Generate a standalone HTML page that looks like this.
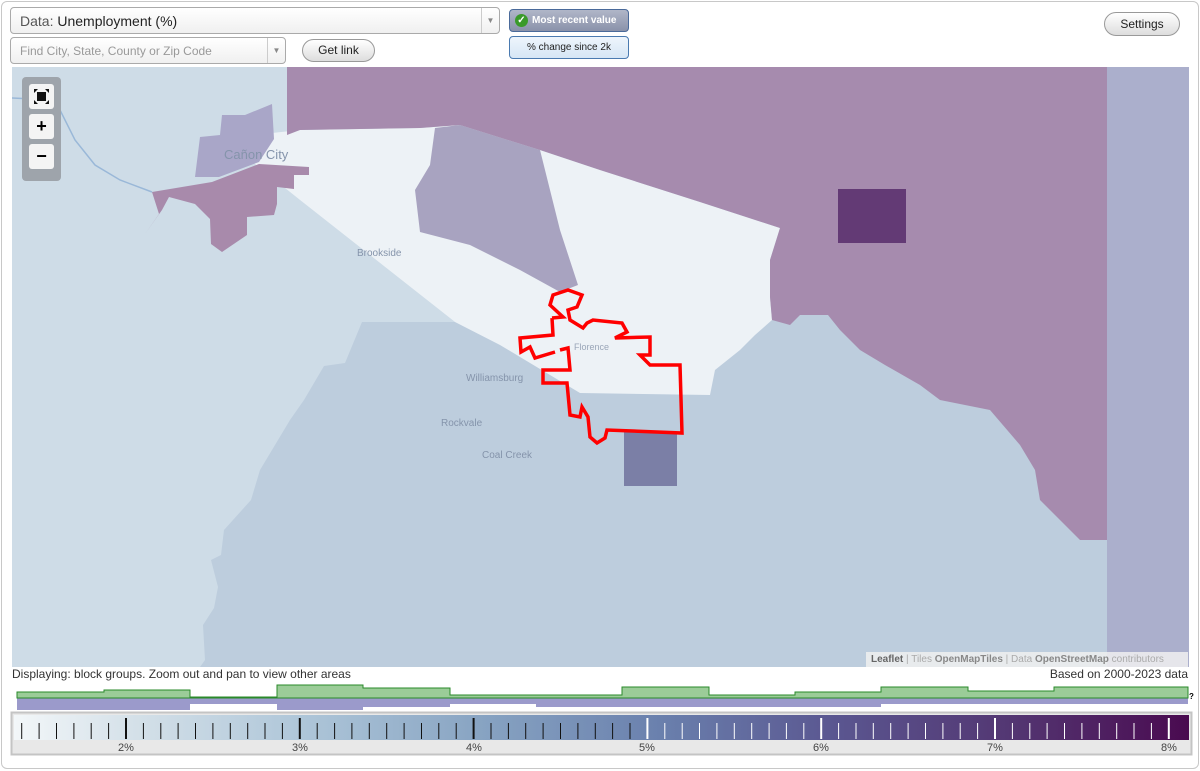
<!DOCTYPE html>
<html><head><meta charset="utf-8"><style>
*{margin:0;padding:0;box-sizing:border-box}
body{width:1200px;height:771px;background:#fff;font-family:"Liberation Sans",Arial,sans-serif;position:relative;overflow:hidden}
.frame{position:absolute;left:1px;top:1px;width:1198px;height:768px;border:1px solid #c8c8c8;border-radius:6px}
.sel{position:absolute;border:1px solid #aaa;border-radius:4px;background:linear-gradient(#fff,#f0f0f0);}
.arrow{position:absolute;right:0;top:0;bottom:0;width:18px;border-left:1px solid #ccc;color:#888;font-size:8px;text-align:center}
.btn{position:absolute;border:1px solid #999;border-radius:12px;background:linear-gradient(#fff,#ddd);font-size:12px;text-align:center;color:#222}
.t{position:absolute;color:#8594ab;font-family:"Liberation Sans",sans-serif;white-space:nowrap}
</style></head><body>
<div class="frame"></div>
<div class="sel" style="left:10px;top:7px;width:490px;height:27px"><span style="position:absolute;left:9px;top:5px;font-size:14px;color:#555">Data: <span style="color:#222">Unemployment (%)</span></span><div class="arrow" style="padding-top:8px">▼</div></div>
<div class="sel" style="left:10px;top:37px;width:276px;height:27px"><span style="position:absolute;left:9px;top:6px;font-size:12px;color:#999">Find City, State, County or Zip Code</span><div class="arrow" style="padding-top:8px">▼</div></div>
<div class="btn" style="left:302px;top:39px;width:73px;height:23px;line-height:21px">Get link</div>
<div style="position:absolute;left:509px;top:9px;width:120px;height:23px;border:1px solid #4a6a9a;border-radius:4px;background:linear-gradient(#b0b6c8,#8a92aa);color:#fff;font-size:10px;font-weight:bold;line-height:21px;padding-left:22px">Most recent value<span style="position:absolute;left:5px;top:4px;width:13px;height:13px;border-radius:50%;background:#3a9a2a;color:#fff;font-size:10px;line-height:13px;text-align:center">✓</span></div>
<div style="position:absolute;left:509px;top:36px;width:120px;height:23px;border:1px solid #4a7ab0;border-radius:4px;background:linear-gradient(#eef5fc,#d6e6f5);color:#222;font-size:10px;line-height:21px;text-align:center">% change since 2k</div>
<div class="btn" style="left:1104px;top:12px;width:76px;height:24px;line-height:22px">Settings</div>

<svg style="position:absolute;left:0;top:0" width="1200" height="771" viewBox="0 0 1200 771">
<defs><clipPath id="m"><rect x="12" y="67" width="1177" height="600"/></clipPath>
<linearGradient id="g" x1="0" x2="1"><stop offset="0" stop-color="#f3f7f9"/><stop offset="0.1" stop-color="#d5e1e9"/><stop offset="0.25" stop-color="#adc5d8"/><stop offset="0.4" stop-color="#87a3c2"/><stop offset="0.55" stop-color="#6a80ad"/><stop offset="0.7" stop-color="#5a5690"/><stop offset="0.85" stop-color="#533672"/><stop offset="1" stop-color="#4a0a50"/></linearGradient></defs>
<g clip-path="url(#m)">
<rect x="12" y="67" width="1177" height="600" fill="#bdcddd"/>
<polygon fill="#cedce7" points="12,67 287,67 287,132 272,135 250,160 300,200 455,322 362,322 345,363 324,366 304,400 290,420 260,470 251,500 224,530 221,555 211,560 218,587 214,608 203,625 205,660 200,667 12,667"/>
<polygon fill="#edf2f6" points="272,133 300,130 420,128 460,125 540,150 600,170 700,202 780,228 770,260 770,297 772,320 755,335 740,350 715,370 710,395 580,393 500,345 455,322 300,200 250,160"/>
<polygon fill="#a8a3c0" points="415,190 430,165 435,128 460,125 540,150 560,230 578,285 560,292 520,270 470,245 420,232"/>
<polygon fill="#a68bae" points="287,67 1107,67 1107,540 1080,540 1060,520 1040,500 1035,470 1020,445 990,410 940,400 920,385 885,365 860,350 840,330 828,315 800,315 790,325 772,320 770,297 770,260 780,228 700,202 600,170 540,150 460,125 420,128 300,130 287,135"/>
<rect x="1107" y="67" width="82" height="600" fill="#abafcc"/>
<rect x="838" y="189" width="68" height="54" fill="#633a75"/>
<rect x="624" y="432" width="53" height="54" fill="#7b7fa6"/>
<polygon fill="#a9a6c8" points="195,177 200,137 220,135 222,115 245,115 272,104 274,139 259,162 219,177"/>
<polygon fill="#a88aab" points="152,192 212,182 259,164 309,167 309,175 294,175 294,189 277,187 277,204 274,215 247,217 247,235 222,252 211,244 210,219 195,204 169,197 162,210 145,234 159,214"/>
<path d="M12,98 L55,100 L75,140 L95,165 L120,180 L152,192" fill="none" stroke="#9ab8d8" stroke-width="1.5"/>
<path d="M552,318 L553,335 L520,338 L521,352 L530,347 L535,358 L555,352 M560,350 L568,348 L570,370 L543,370 L543,383 L567,383 L570,415 L580,417 L582,407 L588,417 L590,437 L597,443 L605,438 L607,430 L682,433 L680,365 L650,365 L640,355 L650,355 L650,337 L615,338 L627,332 L622,323 L593,320 L587,323 L583,328 L570,320 L568,310 L577,307 L582,295 L568,290 L553,295 L550,305 L563,317 L552,318" fill="none" stroke="#ff0000" stroke-width="3.5" stroke-linejoin="miter"/>
</g>
<path fill="#9b9acb" d="M17,698 L1188,698 L1188,704 L881,704 L881,707 L536,707 L536,704 L450,704 L450,707 L363,707 L363,710 L277,710 L277,704 L190,704 L190,710 L104,710 L104,710 L17,710 Z"/>
<path fill="#9bcc98" stroke="#2a8a2a" stroke-width="1" d="M17,698 L17,692 L104,692 L104,690 L190,690 L190,697 L277,697 L277,685 L363,685 L363,688 L450,688 L450,695 L622,695 L622,687 L709,687 L709,695 L795,695 L795,692 L881,692 L881,687 L968,687 L968,691 L1054,691 L1054,687 L1188,687 L1188,698 Z"/>
<text x="1189" y="699" font-size="8" font-weight="bold" font-family="Liberation Sans">?</text>
<rect x="11.5" y="712.5" width="1180" height="42" fill="#e8e8e8" stroke="#c4c4c4" stroke-width="2"/>
<rect x="14" y="715" width="1175" height="25" fill="url(#g)"/>
<g id="ticks"></g>
<g font-size="11" fill="#444" font-family="Liberation Sans" text-anchor="middle"><text x="126" y="751">2%</text><text x="300" y="751">3%</text><text x="474" y="751">4%</text><text x="647" y="751">5%</text><text x="821" y="751">6%</text><text x="995" y="751">7%</text><text x="1169" y="751">8%</text></g>
</svg>
<script>
var g=document.getElementById('ticks'),s='';
for(var i=-6;i<=60;i++){var x=126+i*17.38;if(x>1187)break;var maj=(i%10==0);var c=x<640?'#111':'#fff';
s+='<line x1="'+x.toFixed(1)+'" x2="'+x.toFixed(1)+'" y1="'+(maj?718:723)+'" y2="739" stroke="'+c+'" stroke-width="'+(maj?2:1)+'"/>';}
g.innerHTML=s;
</script>
<div style="position:absolute;left:22px;top:77px;width:39px;height:104px;background:#9ea4ab;border-radius:4px"></div>
<div style="position:absolute;left:29px;top:84px;width:25px;height:25px;background:#f4f4f4;border-radius:3px"><svg width="25" height="25"><rect x="8" y="8" width="9" height="9" fill="#111"/><path d="M5,5 L9,5 L5,9Z M20,5 L16,5 L20,9Z M5,20 L9,20 L5,16Z M20,20 L16,20 L20,16Z" fill="#111"/></svg></div>
<div style="position:absolute;left:29px;top:114px;width:25px;height:25px;background:#f4f4f4;border-radius:3px;text-align:center;font-size:18px;font-weight:bold;line-height:25px">+</div>
<div style="position:absolute;left:29px;top:144px;width:25px;height:25px;background:#f4f4f4;border-radius:3px;text-align:center;font-size:18px;font-weight:bold;line-height:24px">−</div>
<div class="t" style="left:224px;top:147px;font-size:13px">Cañon City</div>
<div class="t" style="left:357px;top:248px;font-size:10px">Brookside</div>
<div class="t" style="left:574px;top:342px;font-size:9px;color:#9aa6b8">Florence</div>
<div class="t" style="left:466px;top:373px;font-size:10px">Williamsburg</div>
<div class="t" style="left:441px;top:418px;font-size:10px">Rockvale</div>
<div class="t" style="left:482px;top:450px;font-size:10px">Coal Creek</div>
<div style="position:absolute;left:866px;top:652px;width:322px;height:15px;background:rgba(240,240,240,0.85);font-size:10px;line-height:15px;padding-left:5px;color:#aaa;white-space:nowrap"><b style="color:#666">Leaflet</b> | Tiles <b style="color:#888">OpenMapTiles</b> | Data <b style="color:#888">OpenStreetMap</b> contributors</div>
<div style="position:absolute;left:12px;top:667px;font-size:12px;color:#333">Displaying: block groups. Zoom out and pan to view other areas</div>
<div style="position:absolute;right:12px;top:667px;font-size:12px;color:#333">Based on 2000-2023 data</div>
</body></html>
